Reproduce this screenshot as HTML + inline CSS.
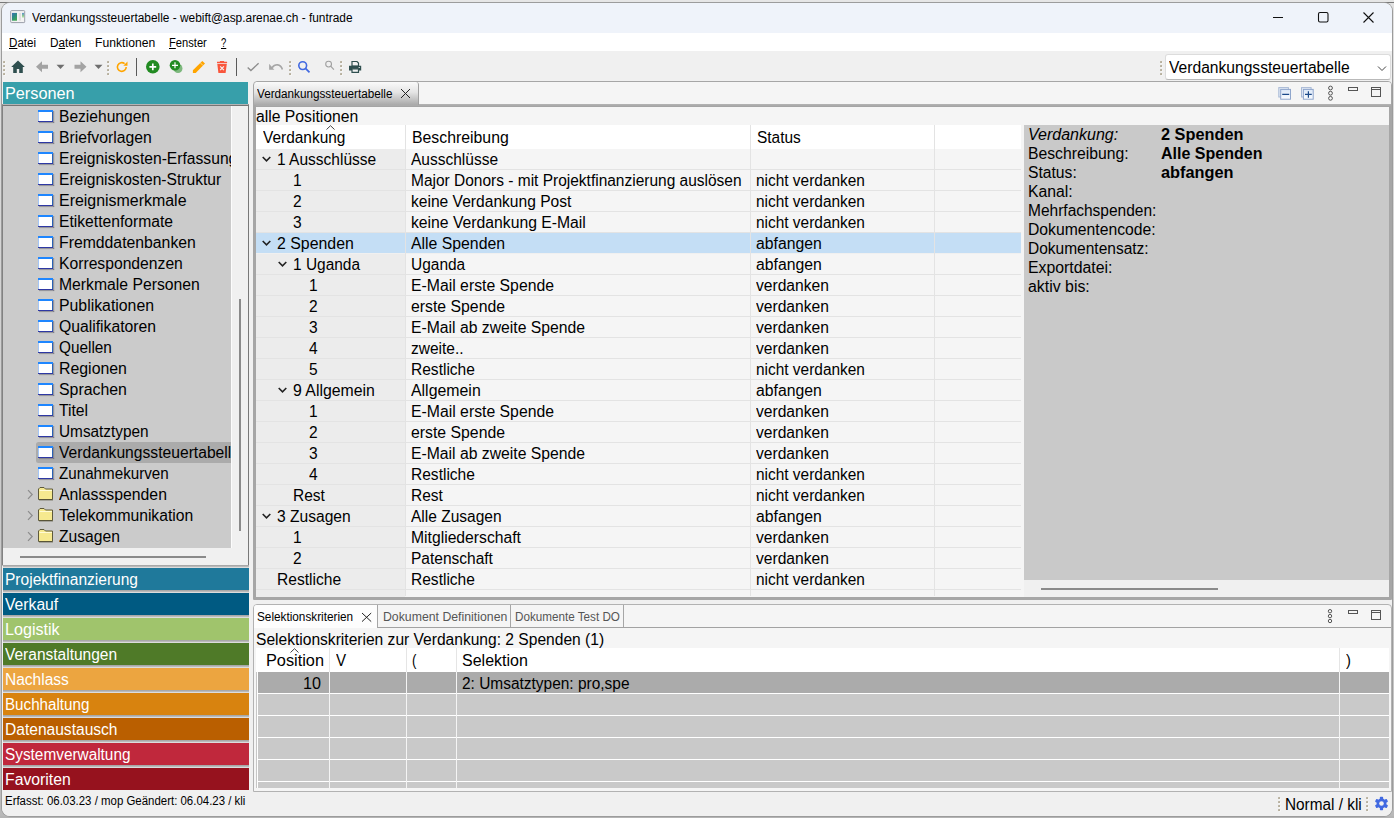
<!DOCTYPE html><html lang="de"><head><meta charset="utf-8"><title>Verdankungssteuertabelle - webift@asp.arenae.ch - funtrade</title><style>
*{box-sizing:border-box;margin:0;padding:0}
html,body{width:1394px;height:818px;overflow:hidden}
body{background:linear-gradient(#e2e2e2,#d4d4d4 30%,#c4c4c4 90%,#b8b8b8);font-family:"Liberation Sans",sans-serif;font-size:16px;color:#000;position:relative}
.abs,#win *{position:absolute}
#win u{position:static}
.tx{transform-origin:0 50%;white-space:pre}
#bgline{left:0;top:2px;width:1394px;height:1px;background:#787878}
#bgtop{left:0;top:0;width:1394px;height:2px;background:#e6e6e6}
#bgbot{left:0;top:816px;width:1394px;height:2px;background:#b4b4b4}
#win{position:absolute;left:2px;top:3px;width:1390px;height:813px;background:#f0f0f0;border-radius:8px;overflow:hidden;box-shadow:0 0 0 1px #9c9c9c}
#win span,#win div{white-space:nowrap}
.ui{font-family:"Liberation Sans",sans-serif;font-size:12px}
#title{left:0;top:0;width:1390px;height:30px;background:#eff3fa}
#menu{left:0;top:30px;width:1390px;height:18px;background:#fff}
#tool{left:0;top:48px;width:1390px;height:30px;background:#f0f0f0}
.t16{font-size:16px;line-height:21px;height:21px}
.t12{font-size:12px;line-height:16px;height:16px}
u{text-decoration:underline;text-underline-offset:1px}
.bar{left:1px;width:246px;height:22px;color:#fff;font-size:16px;line-height:22px;padding-left:3px}
.bar+i{}
.gap{left:1px;width:246px;height:3px;background:linear-gradient(#a8a8a8,#a8a8a8 1px,#dcdcdc 2.5px,#eee)}
.trow{left:0;width:765px;height:21px;background:#f5f5f5;border-bottom:1px solid #e3e3e3}
.trow span{top:0;line-height:21px;font-size:16px}
.vsep{width:1px;background:#e3e3e3}
.chev{width:9px;height:6px}
.ticon{left:36px;width:15px;height:12px}
.titem{left:57px;font-size:16px;line-height:21px;height:21px}
</style></head><body><div class="abs" id="bgtop"></div><div class="abs" id="bgline"></div><div class="abs" id="bgbot"></div><div id="win"><div id="title"><svg style="left:8px;top:7px" width="16" height="14" viewBox="0 0 16 14"><defs><linearGradient id="ga" x1="0" y1="0" x2="0.6" y2="1"><stop offset="0" stop-color="#3d6fb6"/><stop offset="0.5" stop-color="#2d8a86"/><stop offset="1" stop-color="#3fa653"/></linearGradient><linearGradient id="gb" x1="0" y1="0" x2="0" y2="1"><stop offset="0" stop-color="#5a8fd0"/><stop offset="0.6" stop-color="#8fd08a"/><stop offset="1" stop-color="#f4f4f4"/></linearGradient></defs><rect x="0.7" y="0.6" width="14" height="12" rx="0.8" fill="#f3f3f3" stroke="#9a9ea8" stroke-width="1"/><rect x="2" y="2.900" width="5" height="7.800" fill="url(#ga)"/><rect x="8.800" y="2.900" width="2.200" height="7.800" fill="#dedede"/><rect x="12" y="2.900" width="2.100" height="5.400" fill="url(#gb)"/></svg><span class="tx" style="left:30.00px;top:6.5px;font-size:12px;line-height:16px;transform:scaleX(0.9902)">Verdankungssteuertabelle - webift@asp.arenae.ch - funtrade</span><svg style="left:1269px;top:7px" width="110" height="16" viewBox="0 0 110 16" fill="none" stroke="#111" stroke-width="1.1"><path d="M2 7.5h10"/><rect x="47.5" y="2.5" width="9.5" height="9.5" rx="1.5"/><path d="M92.5 2.5l10 10M102.5 2.5l-10 10"/></svg></div><div id="menu"><span class="tx" style="left:7.00px;top:1.5px;font-size:12px;line-height:16px;transform:scaleX(0.9667)"><u>D</u>atei</span><span class="tx" style="left:48.00px;top:1.5px;font-size:12px;line-height:16px;transform:scaleX(0.9794)">D<u>a</u>ten</span><span class="tx" style="left:93.00px;top:1.5px;font-size:12px;line-height:16px;transform:scaleX(1.0138)">Funktionen</span><span class="tx" style="left:167.00px;top:1.5px;font-size:12px;line-height:16px;transform:scaleX(0.9288)"><u>F</u>enster</span><span class="tx" style="left:219.00px;top:1.5px;font-size:12px;line-height:16px;transform:scaleX(0.7867)"><u>?</u></span></div><div id="tool"><svg style="left:1px;top:10px" width="3" height="15" viewBox="0 0 3 15"><rect x="1" y="1" width="1.6" height="1.6" fill="#fbfbfb"/><rect x="0.2" y="0.2" width="1.7" height="1.7" fill="#a59c84"/><rect x="1" y="5" width="1.6" height="1.6" fill="#fbfbfb"/><rect x="0.2" y="4.2" width="1.7" height="1.7" fill="#a59c84"/><rect x="1" y="9" width="1.6" height="1.6" fill="#fbfbfb"/><rect x="0.2" y="8.2" width="1.7" height="1.7" fill="#a59c84"/><rect x="1" y="13" width="1.6" height="1.6" fill="#fbfbfb"/><rect x="0.2" y="12.2" width="1.7" height="1.7" fill="#a59c84"/></svg><svg style="left:105px;top:10px" width="3" height="15" viewBox="0 0 3 15"><rect x="1" y="1" width="1.6" height="1.6" fill="#fbfbfb"/><rect x="0.2" y="0.2" width="1.7" height="1.7" fill="#a59c84"/><rect x="1" y="5" width="1.6" height="1.6" fill="#fbfbfb"/><rect x="0.2" y="4.2" width="1.7" height="1.7" fill="#a59c84"/><rect x="1" y="9" width="1.6" height="1.6" fill="#fbfbfb"/><rect x="0.2" y="8.2" width="1.7" height="1.7" fill="#a59c84"/><rect x="1" y="13" width="1.6" height="1.6" fill="#fbfbfb"/><rect x="0.2" y="12.2" width="1.7" height="1.7" fill="#a59c84"/></svg><svg style="left:287px;top:10px" width="3" height="15" viewBox="0 0 3 15"><rect x="1" y="1" width="1.6" height="1.6" fill="#fbfbfb"/><rect x="0.2" y="0.2" width="1.7" height="1.7" fill="#a59c84"/><rect x="1" y="5" width="1.6" height="1.6" fill="#fbfbfb"/><rect x="0.2" y="4.2" width="1.7" height="1.7" fill="#a59c84"/><rect x="1" y="9" width="1.6" height="1.6" fill="#fbfbfb"/><rect x="0.2" y="8.2" width="1.7" height="1.7" fill="#a59c84"/><rect x="1" y="13" width="1.6" height="1.6" fill="#fbfbfb"/><rect x="0.2" y="12.2" width="1.7" height="1.7" fill="#a59c84"/></svg><svg style="left:338px;top:10px" width="3" height="15" viewBox="0 0 3 15"><rect x="1" y="1" width="1.6" height="1.6" fill="#fbfbfb"/><rect x="0.2" y="0.2" width="1.7" height="1.7" fill="#a59c84"/><rect x="1" y="5" width="1.6" height="1.6" fill="#fbfbfb"/><rect x="0.2" y="4.2" width="1.7" height="1.7" fill="#a59c84"/><rect x="1" y="9" width="1.6" height="1.6" fill="#fbfbfb"/><rect x="0.2" y="8.2" width="1.7" height="1.7" fill="#a59c84"/><rect x="1" y="13" width="1.6" height="1.6" fill="#fbfbfb"/><rect x="0.2" y="12.2" width="1.7" height="1.7" fill="#a59c84"/></svg><svg id="tbicons" style="left:0;top:0" width="370" height="30" viewBox="0 0 370 30"><path d="M16 9.6L9.2 16h2v6h3.6v-4h2.4v4h3.6v-6h2z" fill="#2f4f4f"/><path d="M34 15.8l6-5.5v3.5h6v4h-6v3.5z" fill="#a3a3a3"/><path d="M54.5 13.8h8l-4 4.2z" fill="#6e6e6e"/><path d="M84.5 15.8l-6-5.5v3.5h-6v4h6v3.5z" fill="#a3a3a3"/><path d="M92.5 13.8h8l-4 4.2z" fill="#6e6e6e"/><path d="M124.2 16a4.4 4.4 0 1 1-1.6-3.4" fill="none" stroke="#ffa500" stroke-width="1.6"/><path d="M125.5 10.5v4.2h-4.2z" fill="#ffa500"/><rect x="134" y="7" width="1" height="18" fill="#5a5a5a"/><circle cx="150.8" cy="15.8" r="6.8" fill="#228b22"/><path d="M150.8 12.4v6.8M147.4 15.8h6.8" stroke="#fff" stroke-width="1.7"/><circle cx="176" cy="17.5" r="4.5" fill="#7db87d"/><circle cx="173" cy="14.3" r="5.3" fill="#228b22"/><path d="M173 11.3v6M170 14.3h6" stroke="#fff" stroke-width="1.2"/><path d="M190.9 22V19.2L200.3 10 203 12.6 193.7 22z" fill="#ffa500"/><path d="M198.4 11.9l2.7 2.7" stroke="#f3ead6" stroke-width="0.7"/><path d="M215 10.8h10.1v1.4h-10.1zM217.9 9.9h4.2v1h-4.200zM215.300 13h9.500l-1.200 9h-7.200z" fill="#f9563c"/><path d="M218.2 15.300l3.700 3.800M221.900 15.300l-3.700 3.800" stroke="#f3f3f3" stroke-width="1.200"/><rect x="234" y="7" width="1" height="18" fill="#5a5a5a"/><path d="M245.7 16.500L248.900 19.600 256.600 12.200" fill="none" stroke="#8f8f8f" stroke-width="1.400"/><path d="M270 16.800C273 12.600 278.500 12.600 280.400 18.400" fill="none" stroke="#a6a6a6" stroke-width="1.600"/><path d="M267.100 12.700V18.800H272.300z" fill="#a6a6a6"/><circle cx="300.700" cy="14.600" r="3.900" fill="none" stroke="#4169e1" stroke-width="1.600"/><path d="M303.500 17.400L307.500 21.300" stroke="#4169e1" stroke-width="1.800"/><circle cx="326.600" cy="13.100" r="2.900" fill="none" stroke="#a0a0a0" stroke-width="1.100"/><path d="M328.700 15.200L331.900 18.600" stroke="#a0a0a0" stroke-width="1.200"/><path d="M350 10.500h5l1.500 1.500v3h-6.500z" fill="#f2f2f2" stroke="#2f4f4f" stroke-width="1.200"/><path d="M347 14.800h12.200v4.700h-12.200z" fill="#2f4f4f"/><path d="M350 17.800h6.500v3.600h-6.500z" fill="#f2f2f2" stroke="#2f4f4f" stroke-width="1.200"/><rect x="356.600" y="16" width="1.300" height="0.900" fill="#e8eeee"/></svg><svg style="left:1158px;top:10px" width="3" height="15" viewBox="0 0 3 15"><rect x="1" y="1" width="1.6" height="1.6" fill="#fbfbfb"/><rect x="0.2" y="0.2" width="1.7" height="1.7" fill="#a59c84"/><rect x="1" y="5" width="1.6" height="1.6" fill="#fbfbfb"/><rect x="0.2" y="4.2" width="1.7" height="1.7" fill="#a59c84"/><rect x="1" y="9" width="1.6" height="1.6" fill="#fbfbfb"/><rect x="0.2" y="8.2" width="1.7" height="1.7" fill="#a59c84"/><rect x="1" y="13" width="1.6" height="1.6" fill="#fbfbfb"/><rect x="0.2" y="12.2" width="1.7" height="1.7" fill="#a59c84"/></svg><div style="left:1163px;top:3px;width:226px;height:26px;background:#fff;border:1px solid #dcdcdc;border-bottom-color:#b9b9b9;border-radius:3px"></div><span class="tx" style="left:1167.00px;top:6px;font-size:16px;line-height:21px;transform:scaleX(0.9761)">Verdankungssteuertabelle</span><svg style="left:1375px;top:13.7px" width="10" height="7" viewBox="0 0 10 7"><path d="M1 1.5l4 4 4-4" fill="none" stroke="#444" stroke-width="1"/></svg></div><div style="left:1px;top:79px;width:245px;height:22px;background:#379faa"></div><span class="tx" style="left:3.00px;top:80px;font-size:16px;line-height:21px;transform:scaleX(1.0155);color:#fff">Personen</span><div id="tree" style="left:0;top:101px;width:247px;height:462px;background:#f0f0f0;border:1px solid #828282;border-top-color:#b4b4b4;border-right-color:#787878;border-bottom-color:#fff;overflow:hidden"><div style="left:0;top:0;width:228px;height:443px;background:#cbcbcb"></div><div style="left:228px;top:0;width:1px;height:443px;background:#fcfcfc"></div><div style="left:0;top:0;width:245px;height:1px;background:#747474"></div><div style="left:0;top:0;width:228px;height:443px;overflow:hidden"><svg style="left:35px;top:5px" width="17" height="14" viewBox="0 0 17 14"><rect x="15" y="1" width="1.2" height="12" fill="#6a6a78" opacity="0.55"/><rect x="1" y="12" width="15.2" height="1.100" fill="#6a6a78" opacity="0.55"/><rect x="0" y="0" width="15" height="12" fill="#fff"/><rect x="0" y="2" width="1" height="10" fill="#a4c6f6"/><rect x="14" y="2" width="1" height="10" fill="#2a62b4"/><rect x="0" y="11" width="15" height="1" fill="#2e38a4"/><rect x="0" y="0" width="15" height="2" fill="#1e86ff"/></svg><span class="tx" style="left:56.00px;top:1px;font-size:16px;line-height:21px;transform:scaleX(0.9743)">Beziehungen</span><svg style="left:35px;top:26px" width="17" height="14" viewBox="0 0 17 14"><rect x="15" y="1" width="1.2" height="12" fill="#6a6a78" opacity="0.55"/><rect x="1" y="12" width="15.2" height="1.100" fill="#6a6a78" opacity="0.55"/><rect x="0" y="0" width="15" height="12" fill="#fff"/><rect x="0" y="2" width="1" height="10" fill="#a4c6f6"/><rect x="14" y="2" width="1" height="10" fill="#2a62b4"/><rect x="0" y="11" width="15" height="1" fill="#2e38a4"/><rect x="0" y="0" width="15" height="2" fill="#1e86ff"/></svg><span class="tx" style="left:56.00px;top:22px;font-size:16px;line-height:21px;transform:scaleX(0.9825)">Briefvorlagen</span><svg style="left:35px;top:47px" width="17" height="14" viewBox="0 0 17 14"><rect x="15" y="1" width="1.2" height="12" fill="#6a6a78" opacity="0.55"/><rect x="1" y="12" width="15.2" height="1.100" fill="#6a6a78" opacity="0.55"/><rect x="0" y="0" width="15" height="12" fill="#fff"/><rect x="0" y="2" width="1" height="10" fill="#a4c6f6"/><rect x="14" y="2" width="1" height="10" fill="#2a62b4"/><rect x="0" y="11" width="15" height="1" fill="#2e38a4"/><rect x="0" y="0" width="15" height="2" fill="#1e86ff"/></svg><span class="tx" style="left:56.00px;top:43px;font-size:16px;line-height:21px;transform:scaleX(0.9780)">Ereigniskosten-Erfassung</span><svg style="left:35px;top:68px" width="17" height="14" viewBox="0 0 17 14"><rect x="15" y="1" width="1.2" height="12" fill="#6a6a78" opacity="0.55"/><rect x="1" y="12" width="15.2" height="1.100" fill="#6a6a78" opacity="0.55"/><rect x="0" y="0" width="15" height="12" fill="#fff"/><rect x="0" y="2" width="1" height="10" fill="#a4c6f6"/><rect x="14" y="2" width="1" height="10" fill="#2a62b4"/><rect x="0" y="11" width="15" height="1" fill="#2e38a4"/><rect x="0" y="0" width="15" height="2" fill="#1e86ff"/></svg><span class="tx" style="left:56.00px;top:64px;font-size:16px;line-height:21px;transform:scaleX(0.9752)">Ereigniskosten-Struktur</span><svg style="left:35px;top:89px" width="17" height="14" viewBox="0 0 17 14"><rect x="15" y="1" width="1.2" height="12" fill="#6a6a78" opacity="0.55"/><rect x="1" y="12" width="15.2" height="1.100" fill="#6a6a78" opacity="0.55"/><rect x="0" y="0" width="15" height="12" fill="#fff"/><rect x="0" y="2" width="1" height="10" fill="#a4c6f6"/><rect x="14" y="2" width="1" height="10" fill="#2a62b4"/><rect x="0" y="11" width="15" height="1" fill="#2e38a4"/><rect x="0" y="0" width="15" height="2" fill="#1e86ff"/></svg><span class="tx" style="left:56.00px;top:85px;font-size:16px;line-height:21px;transform:scaleX(0.9959)">Ereignismerkmale</span><svg style="left:35px;top:110px" width="17" height="14" viewBox="0 0 17 14"><rect x="15" y="1" width="1.2" height="12" fill="#6a6a78" opacity="0.55"/><rect x="1" y="12" width="15.2" height="1.100" fill="#6a6a78" opacity="0.55"/><rect x="0" y="0" width="15" height="12" fill="#fff"/><rect x="0" y="2" width="1" height="10" fill="#a4c6f6"/><rect x="14" y="2" width="1" height="10" fill="#2a62b4"/><rect x="0" y="11" width="15" height="1" fill="#2e38a4"/><rect x="0" y="0" width="15" height="2" fill="#1e86ff"/></svg><span class="tx" style="left:56.00px;top:106px;font-size:16px;line-height:21px;transform:scaleX(0.9785)">Etikettenformate</span><svg style="left:35px;top:131px" width="17" height="14" viewBox="0 0 17 14"><rect x="15" y="1" width="1.2" height="12" fill="#6a6a78" opacity="0.55"/><rect x="1" y="12" width="15.2" height="1.100" fill="#6a6a78" opacity="0.55"/><rect x="0" y="0" width="15" height="12" fill="#fff"/><rect x="0" y="2" width="1" height="10" fill="#a4c6f6"/><rect x="14" y="2" width="1" height="10" fill="#2a62b4"/><rect x="0" y="11" width="15" height="1" fill="#2e38a4"/><rect x="0" y="0" width="15" height="2" fill="#1e86ff"/></svg><span class="tx" style="left:56.00px;top:127px;font-size:16px;line-height:21px;transform:scaleX(0.9861)">Fremddatenbanken</span><svg style="left:35px;top:152px" width="17" height="14" viewBox="0 0 17 14"><rect x="15" y="1" width="1.2" height="12" fill="#6a6a78" opacity="0.55"/><rect x="1" y="12" width="15.2" height="1.100" fill="#6a6a78" opacity="0.55"/><rect x="0" y="0" width="15" height="12" fill="#fff"/><rect x="0" y="2" width="1" height="10" fill="#a4c6f6"/><rect x="14" y="2" width="1" height="10" fill="#2a62b4"/><rect x="0" y="11" width="15" height="1" fill="#2e38a4"/><rect x="0" y="0" width="15" height="2" fill="#1e86ff"/></svg><span class="tx" style="left:56.00px;top:148px;font-size:16px;line-height:21px;transform:scaleX(0.9803)">Korrespondenzen</span><svg style="left:35px;top:173px" width="17" height="14" viewBox="0 0 17 14"><rect x="15" y="1" width="1.2" height="12" fill="#6a6a78" opacity="0.55"/><rect x="1" y="12" width="15.2" height="1.100" fill="#6a6a78" opacity="0.55"/><rect x="0" y="0" width="15" height="12" fill="#fff"/><rect x="0" y="2" width="1" height="10" fill="#a4c6f6"/><rect x="14" y="2" width="1" height="10" fill="#2a62b4"/><rect x="0" y="11" width="15" height="1" fill="#2e38a4"/><rect x="0" y="0" width="15" height="2" fill="#1e86ff"/></svg><span class="tx" style="left:56.00px;top:169px;font-size:16px;line-height:21px;transform:scaleX(0.9836)">Merkmale Personen</span><svg style="left:35px;top:194px" width="17" height="14" viewBox="0 0 17 14"><rect x="15" y="1" width="1.2" height="12" fill="#6a6a78" opacity="0.55"/><rect x="1" y="12" width="15.2" height="1.100" fill="#6a6a78" opacity="0.55"/><rect x="0" y="0" width="15" height="12" fill="#fff"/><rect x="0" y="2" width="1" height="10" fill="#a4c6f6"/><rect x="14" y="2" width="1" height="10" fill="#2a62b4"/><rect x="0" y="11" width="15" height="1" fill="#2e38a4"/><rect x="0" y="0" width="15" height="2" fill="#1e86ff"/></svg><span class="tx" style="left:56.00px;top:190px;font-size:16px;line-height:21px;transform:scaleX(0.9891)">Publikationen</span><svg style="left:35px;top:215px" width="17" height="14" viewBox="0 0 17 14"><rect x="15" y="1" width="1.2" height="12" fill="#6a6a78" opacity="0.55"/><rect x="1" y="12" width="15.2" height="1.100" fill="#6a6a78" opacity="0.55"/><rect x="0" y="0" width="15" height="12" fill="#fff"/><rect x="0" y="2" width="1" height="10" fill="#a4c6f6"/><rect x="14" y="2" width="1" height="10" fill="#2a62b4"/><rect x="0" y="11" width="15" height="1" fill="#2e38a4"/><rect x="0" y="0" width="15" height="2" fill="#1e86ff"/></svg><span class="tx" style="left:56.00px;top:211px;font-size:16px;line-height:21px;transform:scaleX(0.9838)">Qualifikatoren</span><svg style="left:35px;top:236px" width="17" height="14" viewBox="0 0 17 14"><rect x="15" y="1" width="1.2" height="12" fill="#6a6a78" opacity="0.55"/><rect x="1" y="12" width="15.2" height="1.100" fill="#6a6a78" opacity="0.55"/><rect x="0" y="0" width="15" height="12" fill="#fff"/><rect x="0" y="2" width="1" height="10" fill="#a4c6f6"/><rect x="14" y="2" width="1" height="10" fill="#2a62b4"/><rect x="0" y="11" width="15" height="1" fill="#2e38a4"/><rect x="0" y="0" width="15" height="2" fill="#1e86ff"/></svg><span class="tx" style="left:56.00px;top:232px;font-size:16px;line-height:21px;transform:scaleX(0.9592)">Quellen</span><svg style="left:35px;top:257px" width="17" height="14" viewBox="0 0 17 14"><rect x="15" y="1" width="1.2" height="12" fill="#6a6a78" opacity="0.55"/><rect x="1" y="12" width="15.2" height="1.100" fill="#6a6a78" opacity="0.55"/><rect x="0" y="0" width="15" height="12" fill="#fff"/><rect x="0" y="2" width="1" height="10" fill="#a4c6f6"/><rect x="14" y="2" width="1" height="10" fill="#2a62b4"/><rect x="0" y="11" width="15" height="1" fill="#2e38a4"/><rect x="0" y="0" width="15" height="2" fill="#1e86ff"/></svg><span class="tx" style="left:56.00px;top:253px;font-size:16px;line-height:21px;transform:scaleX(0.9917)">Regionen</span><svg style="left:35px;top:278px" width="17" height="14" viewBox="0 0 17 14"><rect x="15" y="1" width="1.2" height="12" fill="#6a6a78" opacity="0.55"/><rect x="1" y="12" width="15.2" height="1.100" fill="#6a6a78" opacity="0.55"/><rect x="0" y="0" width="15" height="12" fill="#fff"/><rect x="0" y="2" width="1" height="10" fill="#a4c6f6"/><rect x="14" y="2" width="1" height="10" fill="#2a62b4"/><rect x="0" y="11" width="15" height="1" fill="#2e38a4"/><rect x="0" y="0" width="15" height="2" fill="#1e86ff"/></svg><span class="tx" style="left:56.00px;top:274px;font-size:16px;line-height:21px;transform:scaleX(0.9918)">Sprachen</span><svg style="left:35px;top:299px" width="17" height="14" viewBox="0 0 17 14"><rect x="15" y="1" width="1.2" height="12" fill="#6a6a78" opacity="0.55"/><rect x="1" y="12" width="15.2" height="1.100" fill="#6a6a78" opacity="0.55"/><rect x="0" y="0" width="15" height="12" fill="#fff"/><rect x="0" y="2" width="1" height="10" fill="#a4c6f6"/><rect x="14" y="2" width="1" height="10" fill="#2a62b4"/><rect x="0" y="11" width="15" height="1" fill="#2e38a4"/><rect x="0" y="0" width="15" height="2" fill="#1e86ff"/></svg><span class="tx" style="left:56.00px;top:295px;font-size:16px;line-height:21px;transform:scaleX(0.9803)">Titel</span><svg style="left:35px;top:320px" width="17" height="14" viewBox="0 0 17 14"><rect x="15" y="1" width="1.2" height="12" fill="#6a6a78" opacity="0.55"/><rect x="1" y="12" width="15.2" height="1.100" fill="#6a6a78" opacity="0.55"/><rect x="0" y="0" width="15" height="12" fill="#fff"/><rect x="0" y="2" width="1" height="10" fill="#a4c6f6"/><rect x="14" y="2" width="1" height="10" fill="#2a62b4"/><rect x="0" y="11" width="15" height="1" fill="#2e38a4"/><rect x="0" y="0" width="15" height="2" fill="#1e86ff"/></svg><span class="tx" style="left:56.00px;top:316px;font-size:16px;line-height:21px;transform:scaleX(0.9596)">Umsatztypen</span><div style="left:33px;top:337px;width:199px;height:21px;background:#ababab;border-radius:2.5px"></div><svg style="left:35px;top:341px" width="17" height="14" viewBox="0 0 17 14"><rect x="15" y="1" width="1.2" height="12" fill="#6a6a78" opacity="0.55"/><rect x="1" y="12" width="15.2" height="1.100" fill="#6a6a78" opacity="0.55"/><rect x="0" y="0" width="15" height="12" fill="#fff"/><rect x="0" y="2" width="1" height="10" fill="#a4c6f6"/><rect x="14" y="2" width="1" height="10" fill="#2a62b4"/><rect x="0" y="11" width="15" height="1" fill="#2e38a4"/><rect x="0" y="0" width="15" height="2" fill="#1e86ff"/></svg><span class="tx" style="left:56.00px;top:337px;font-size:16px;line-height:21px;transform:scaleX(0.9780)">Verdankungssteuertabelle</span><svg style="left:35px;top:362px" width="17" height="14" viewBox="0 0 17 14"><rect x="15" y="1" width="1.2" height="12" fill="#6a6a78" opacity="0.55"/><rect x="1" y="12" width="15.2" height="1.100" fill="#6a6a78" opacity="0.55"/><rect x="0" y="0" width="15" height="12" fill="#fff"/><rect x="0" y="2" width="1" height="10" fill="#a4c6f6"/><rect x="14" y="2" width="1" height="10" fill="#2a62b4"/><rect x="0" y="11" width="15" height="1" fill="#2e38a4"/><rect x="0" y="0" width="15" height="2" fill="#1e86ff"/></svg><span class="tx" style="left:56.00px;top:358px;font-size:16px;line-height:21px;transform:scaleX(0.9487)">Zunahmekurven</span><svg style="left:23.5px;top:384px" width="7" height="11" viewBox="0 0 7 11"><path d="M1 1.2l4.2 4.3-4.2 4.3" fill="none" stroke="#8c8c8c" stroke-width="1.2"/></svg><svg style="left:35px;top:382px" width="16" height="14" viewBox="0 0 16 14"><path d="M0.5 12.5V2l1.5-1.5h4l1.5 1.5h7v10.5z" fill="#f6e98f" stroke="#5e5a3c" stroke-width="1"/><path d="M1.5 3.5h12.5" stroke="#fffbd6" stroke-width="1"/><path d="M1 13h14" stroke="#4a4630" stroke-width="0.6"/></svg><span class="tx" style="left:56.00px;top:379px;font-size:16px;line-height:21px;transform:scaleX(0.9864)">Anlassspenden</span><svg style="left:23.5px;top:405px" width="7" height="11" viewBox="0 0 7 11"><path d="M1 1.2l4.2 4.3-4.2 4.3" fill="none" stroke="#8c8c8c" stroke-width="1.2"/></svg><svg style="left:35px;top:403px" width="16" height="14" viewBox="0 0 16 14"><path d="M0.5 12.5V2l1.5-1.5h4l1.5 1.5h7v10.5z" fill="#f6e98f" stroke="#5e5a3c" stroke-width="1"/><path d="M1.5 3.5h12.5" stroke="#fffbd6" stroke-width="1"/><path d="M1 13h14" stroke="#4a4630" stroke-width="0.6"/></svg><span class="tx" style="left:56.00px;top:400px;font-size:16px;line-height:21px;transform:scaleX(0.9800)">Telekommunikation</span><svg style="left:23.5px;top:426px" width="7" height="11" viewBox="0 0 7 11"><path d="M1 1.2l4.2 4.3-4.2 4.3" fill="none" stroke="#8c8c8c" stroke-width="1.2"/></svg><svg style="left:35px;top:424px" width="16" height="14" viewBox="0 0 16 14"><path d="M0.5 12.5V2l1.5-1.5h4l1.5 1.5h7v10.5z" fill="#f6e98f" stroke="#5e5a3c" stroke-width="1"/><path d="M1.5 3.5h12.5" stroke="#fffbd6" stroke-width="1"/><path d="M1 13h14" stroke="#4a4630" stroke-width="0.6"/></svg><span class="tx" style="left:56.00px;top:421px;font-size:16px;line-height:21px;transform:scaleX(0.9783)">Zusagen</span></div><div style="left:236px;top:194px;width:2px;height:232px;background:#8a8a8a"></div><div style="left:17px;top:451px;width:186px;height:2px;background:#8a8a8a"></div></div><div class="gap" style="top:562px"></div><div class="bar" style="top:565px;background:#1f799b"></div><span class="tx" style="left:3.00px;top:565.5px;font-size:16px;line-height:21px;transform:scaleX(0.9710);color:#fff">Projektfinanzierung</span><div class="gap" style="top:587px"></div><div class="bar" style="top:590px;background:#005a82"></div><span class="tx" style="left:3.00px;top:590.5px;font-size:16px;line-height:21px;transform:scaleX(0.9801);color:#fff">Verkauf</span><div class="gap" style="top:612px"></div><div class="bar" style="top:615px;background:#a0c46c"></div><span class="tx" style="left:3.00px;top:615.5px;font-size:16px;line-height:21px;transform:scaleX(1.0079);color:#fff">Logistik</span><div class="gap" style="top:637px"></div><div class="bar" style="top:640px;background:#4f7a28"></div><span class="tx" style="left:3.00px;top:640.5px;font-size:16px;line-height:21px;transform:scaleX(0.9694);color:#fff">Veranstaltungen</span><div class="gap" style="top:662px"></div><div class="bar" style="top:665px;background:#eca540"></div><span class="tx" style="left:3.00px;top:665.5px;font-size:16px;line-height:21px;transform:scaleX(0.9705);color:#fff">Nachlass</span><div class="gap" style="top:687px"></div><div class="bar" style="top:690px;background:#d8830f"></div><span class="tx" style="left:3.00px;top:690.5px;font-size:16px;line-height:21px;transform:scaleX(0.9485);color:#fff">Buchhaltung</span><div class="gap" style="top:712px"></div><div class="bar" style="top:715px;background:#ba5f00"></div><span class="tx" style="left:3.00px;top:715.5px;font-size:16px;line-height:21px;transform:scaleX(0.9730);color:#fff">Datenaustausch</span><div class="gap" style="top:737px"></div><div class="bar" style="top:740px;background:#c0283c"></div><span class="tx" style="left:3.00px;top:740.5px;font-size:16px;line-height:21px;transform:scaleX(0.9600);color:#fff">Systemverwaltung</span><div class="gap" style="top:762px"></div><div class="bar" style="top:765px;background:#96121e"></div><span class="tx" style="left:3.00px;top:765.5px;font-size:16px;line-height:21px;transform:scaleX(0.9854);color:#fff">Favoriten</span><div style="left:0;top:788px;width:1390px;height:25px;background:#f0f0f0"></div><span class="tx" style="left:3.00px;top:790.4px;font-size:12px;line-height:16px;transform:scaleX(0.9533)">Erfasst: 06.03.23 / mop Geändert: 06.04.23 / kli</span><svg style="left:1276.2px;top:794px" width="3" height="15" viewBox="0 0 3 15"><rect x="1" y="1" width="1.6" height="1.6" fill="#fbfbfb"/><rect x="0.2" y="0.2" width="1.7" height="1.7" fill="#a59c84"/><rect x="1" y="5" width="1.6" height="1.6" fill="#fbfbfb"/><rect x="0.2" y="4.2" width="1.7" height="1.7" fill="#a59c84"/><rect x="1" y="9" width="1.6" height="1.6" fill="#fbfbfb"/><rect x="0.2" y="8.2" width="1.7" height="1.7" fill="#a59c84"/><rect x="1" y="13" width="1.6" height="1.6" fill="#fbfbfb"/><rect x="0.2" y="12.2" width="1.7" height="1.7" fill="#a59c84"/></svg><span class="tx" style="left:1283.00px;top:791px;font-size:16px;line-height:21px;transform:scaleX(0.9591)">Normal / kli</span><svg style="left:1364.2px;top:794px" width="3" height="15" viewBox="0 0 3 15"><rect x="1" y="1" width="1.6" height="1.6" fill="#fbfbfb"/><rect x="0.2" y="0.2" width="1.7" height="1.7" fill="#a59c84"/><rect x="1" y="5" width="1.6" height="1.6" fill="#fbfbfb"/><rect x="0.2" y="4.2" width="1.7" height="1.7" fill="#a59c84"/><rect x="1" y="9" width="1.6" height="1.6" fill="#fbfbfb"/><rect x="0.2" y="8.2" width="1.7" height="1.7" fill="#a59c84"/><rect x="1" y="13" width="1.6" height="1.6" fill="#fbfbfb"/><rect x="0.2" y="12.2" width="1.7" height="1.7" fill="#a59c84"/></svg><svg style="left:1371.5px;top:793.3px" width="15" height="15" viewBox="0 0 15 15"><g fill="#4169e1"><circle cx="7.5" cy="7.5" r="4.900"/><rect x="5.900" y="0.800" width="3.200" height="3.400" rx="0.700" transform="rotate(0 7.5 7.5)"/><rect x="5.900" y="0.800" width="3.200" height="3.400" rx="0.700" transform="rotate(60 7.5 7.5)"/><rect x="5.900" y="0.800" width="3.200" height="3.400" rx="0.700" transform="rotate(120 7.5 7.5)"/><rect x="5.900" y="0.800" width="3.200" height="3.400" rx="0.700" transform="rotate(180 7.5 7.5)"/><rect x="5.900" y="0.800" width="3.200" height="3.400" rx="0.700" transform="rotate(240 7.5 7.5)"/><rect x="5.900" y="0.800" width="3.200" height="3.400" rx="0.700" transform="rotate(300 7.5 7.5)"/></g><circle cx="7.5" cy="7.5" r="2.300" fill="#f0f0f0"/></svg><div id="ed" style="left:251px;top:78px;width:1139px;height:519px;background:#f5f5f5;border:1px solid #a6a6a6;border-radius:4px 4px 0 0;overflow:hidden"><div style="left:0;top:0;width:1137px;height:23px;background:#f5f5f5"></div><div style="left:0;top:22px;width:1137px;height:3px;background:linear-gradient(#b4b4b4,#a2a2a2)"></div><div style="left:0;top:0;width:2px;height:517px;background:#a6a6a6"></div><div style="left:1135px;top:24px;width:2px;height:493px;background:#a6a6a6"></div><div style="left:0;top:515px;width:1137px;height:2px;background:#a6a6a6"></div><div style="left:0;top:0;width:164.5px;height:23px;background:linear-gradient(#fafafa,#e4e4e4 45%,#a9a9a9);border-right:1px solid #a0a0a0;border-radius:3px 3px 0 0"></div><span class="tx" style="left:3.00px;top:3.5px;font-size:12px;line-height:16px;transform:scaleX(0.9759)">Verdankungssteuertabelle</span><svg style="left:146px;top:5.7px" width="11" height="11" viewBox="0 0 11 11"><path d="M1 1l9 9M10 1l-9 9" stroke="#222" stroke-width="1"/></svg><svg style="left:1020px;top:2px" width="114" height="20" viewBox="0 0 114 20" fill="none"><defs><linearGradient id="gi" x1="0" y1="0" x2="0" y2="1"><stop offset="0" stop-color="#dbe7f7"/><stop offset="1" stop-color="#fbfdff"/></linearGradient></defs><rect x="4.8" y="3.600" width="9.600" height="9.400" fill="#e2eaf6" stroke="#a8b9d6"/><rect x="6.700" y="5.400" width="9.800" height="9.800" fill="url(#gi)" stroke="#8fa6cc"/><path d="M8.200 10.400h7" stroke="#1c4a8a" stroke-width="1.300"/><rect x="27.500" y="3.600" width="9.600" height="9.400" fill="#e2eaf6" stroke="#a8b9d6"/><rect x="29.400" y="5.400" width="9.800" height="9.800" fill="url(#gi)" stroke="#8fa6cc"/><path d="M31 10.400h6.800M34.400 7.200v6.500" stroke="#1c4a8a" stroke-width="1.200"/><g stroke="#444" stroke-width="0.9"><circle cx="56.5" cy="4" r="1.900"/><circle cx="56.5" cy="9.200" r="1.900"/><circle cx="56.5" cy="14.300" r="1.900"/></g><rect x="74.5" y="3.5" width="9" height="3" stroke="#555" stroke-width="1"/><rect x="97.5" y="3.5" width="9" height="9" stroke="#555" stroke-width="1"/><path d="M97.5 5.5h9" stroke="#555" stroke-width="1"/></svg><span class="tx" style="left:2.00px;top:24px;font-size:16px;line-height:21px;transform:scaleX(0.9822)">alle Positionen</span><div id="tbl" style="left:2px;top:43px;width:765px;height:472px;overflow:hidden;background:#f5f5f5"><div style="left:0;top:0;width:765px;height:24px;background:#fff"></div><svg style="left:70px;top:0px" width="9" height="5" viewBox="0 0 9 5"><path d="M0.5 4.5l4-3.8 4 3.8" fill="none" stroke="#444" stroke-width="1"/></svg><span class="tx" style="left:7.00px;top:2px;font-size:16px;line-height:21px;transform:scaleX(0.9647)">Verdankung</span><span class="tx" style="left:156.00px;top:2px;font-size:16px;line-height:21px;transform:scaleX(0.9885)">Beschreibung</span><span class="tx" style="left:501.00px;top:2px;font-size:16px;line-height:21px;transform:scaleX(0.9669)">Status</span><div class="trow" style="top:24px"><div style="left:0;top:0;width:149px;height:20px;background:#ececec"></div><svg style="left:6px;top:6.5px" width="10" height="7" viewBox="0 0 10 7"><path d="M0.7 1L4.5 4.8 8.3 1" fill="none" stroke="#222" stroke-width="1.6"/></svg><span class="tx" style="left:21.00px;top:0px;font-size:16px;line-height:21px;transform:scaleX(0.9698)">1 Ausschlüsse</span><span class="tx" style="left:155.00px;top:0px;font-size:16px;line-height:21px;transform:scaleX(0.9696)">Ausschlüsse</span></div><div class="trow" style="top:45px"><div style="left:0;top:0;width:149px;height:20px;background:#ececec"></div><span class="tx" style="left:37.00px;top:0px;font-size:16px;line-height:21px;transform:scaleX(0.9690)">1</span><span class="tx" style="left:155.00px;top:0px;font-size:16px;line-height:21px;transform:scaleX(0.9681)">Major Donors - mit Projektfinanzierung auslösen</span><span class="tx" style="left:500.00px;top:0px;font-size:16px;line-height:21px;transform:scaleX(0.9641)">nicht verdanken</span></div><div class="trow" style="top:66px"><div style="left:0;top:0;width:149px;height:20px;background:#ececec"></div><span class="tx" style="left:37.00px;top:0px;font-size:16px;line-height:21px;transform:scaleX(0.9690)">2</span><span class="tx" style="left:155.00px;top:0px;font-size:16px;line-height:21px;transform:scaleX(0.9748)">keine Verdankung Post</span><span class="tx" style="left:500.00px;top:0px;font-size:16px;line-height:21px;transform:scaleX(0.9641)">nicht verdanken</span></div><div class="trow" style="top:87px"><div style="left:0;top:0;width:149px;height:20px;background:#ececec"></div><span class="tx" style="left:37.00px;top:0px;font-size:16px;line-height:21px;transform:scaleX(0.9690)">3</span><span class="tx" style="left:155.00px;top:0px;font-size:16px;line-height:21px;transform:scaleX(0.9830)">keine Verdankung E-Mail</span><span class="tx" style="left:500.00px;top:0px;font-size:16px;line-height:21px;transform:scaleX(0.9641)">nicht verdanken</span></div><div class="trow" style="top:108px;background:#c4def5;border-bottom-color:#f0f0f0"><svg style="left:6px;top:6.5px" width="10" height="7" viewBox="0 0 10 7"><path d="M0.7 1L4.5 4.8 8.3 1" fill="none" stroke="#222" stroke-width="1.6"/></svg><span class="tx" style="left:21.00px;top:0px;font-size:16px;line-height:21px;transform:scaleX(0.9926)">2 Spenden</span><span class="tx" style="left:155.00px;top:0px;font-size:16px;line-height:21px;transform:scaleX(0.9878)">Alle Spenden</span><span class="tx" style="left:500.00px;top:0px;font-size:16px;line-height:21px;transform:scaleX(0.9848)">abfangen</span></div><div class="trow" style="top:129px"><div style="left:0;top:0;width:149px;height:20px;background:#ececec"></div><svg style="left:22px;top:6.5px" width="10" height="7" viewBox="0 0 10 7"><path d="M0.7 1L4.5 4.8 8.3 1" fill="none" stroke="#222" stroke-width="1.6"/></svg><span class="tx" style="left:37.00px;top:0px;font-size:16px;line-height:21px;transform:scaleX(0.9655)">1 Uganda</span><span class="tx" style="left:155.00px;top:0px;font-size:16px;line-height:21px;transform:scaleX(0.9670)">Uganda</span><span class="tx" style="left:500.00px;top:0px;font-size:16px;line-height:21px;transform:scaleX(0.9848)">abfangen</span></div><div class="trow" style="top:150px"><div style="left:0;top:0;width:149px;height:20px;background:#ececec"></div><span class="tx" style="left:53.00px;top:0px;font-size:16px;line-height:21px;transform:scaleX(0.9690)">1</span><span class="tx" style="left:155.00px;top:0px;font-size:16px;line-height:21px;transform:scaleX(0.9865)">E-Mail erste Spende</span><span class="tx" style="left:500.00px;top:0px;font-size:16px;line-height:21px;transform:scaleX(0.9758)">verdanken</span></div><div class="trow" style="top:171px"><div style="left:0;top:0;width:149px;height:20px;background:#ececec"></div><span class="tx" style="left:53.00px;top:0px;font-size:16px;line-height:21px;transform:scaleX(0.9690)">2</span><span class="tx" style="left:155.00px;top:0px;font-size:16px;line-height:21px;transform:scaleX(0.9876)">erste Spende</span><span class="tx" style="left:500.00px;top:0px;font-size:16px;line-height:21px;transform:scaleX(0.9758)">verdanken</span></div><div class="trow" style="top:192px"><div style="left:0;top:0;width:149px;height:20px;background:#ececec"></div><span class="tx" style="left:53.00px;top:0px;font-size:16px;line-height:21px;transform:scaleX(0.9690)">3</span><span class="tx" style="left:155.00px;top:0px;font-size:16px;line-height:21px;transform:scaleX(0.9837)">E-Mail ab zweite Spende</span><span class="tx" style="left:500.00px;top:0px;font-size:16px;line-height:21px;transform:scaleX(0.9758)">verdanken</span></div><div class="trow" style="top:213px"><div style="left:0;top:0;width:149px;height:20px;background:#ececec"></div><span class="tx" style="left:53.00px;top:0px;font-size:16px;line-height:21px;transform:scaleX(0.9690)">4</span><span class="tx" style="left:155.00px;top:0px;font-size:16px;line-height:21px;transform:scaleX(0.9700)">zweite..</span><span class="tx" style="left:500.00px;top:0px;font-size:16px;line-height:21px;transform:scaleX(0.9758)">verdanken</span></div><div class="trow" style="top:234px"><div style="left:0;top:0;width:149px;height:20px;background:#ececec"></div><span class="tx" style="left:53.00px;top:0px;font-size:16px;line-height:21px;transform:scaleX(0.9690)">5</span><span class="tx" style="left:155.00px;top:0px;font-size:16px;line-height:21px;transform:scaleX(0.9709)">Restliche</span><span class="tx" style="left:500.00px;top:0px;font-size:16px;line-height:21px;transform:scaleX(0.9641)">nicht verdanken</span></div><div class="trow" style="top:255px"><div style="left:0;top:0;width:149px;height:20px;background:#ececec"></div><svg style="left:22px;top:6.5px" width="10" height="7" viewBox="0 0 10 7"><path d="M0.7 1L4.5 4.8 8.3 1" fill="none" stroke="#222" stroke-width="1.6"/></svg><span class="tx" style="left:37.00px;top:0px;font-size:16px;line-height:21px;transform:scaleX(0.9892)">9 Allgemein</span><span class="tx" style="left:155.00px;top:0px;font-size:16px;line-height:21px;transform:scaleX(0.9925)">Allgemein</span><span class="tx" style="left:500.00px;top:0px;font-size:16px;line-height:21px;transform:scaleX(0.9848)">abfangen</span></div><div class="trow" style="top:276px"><div style="left:0;top:0;width:149px;height:20px;background:#ececec"></div><span class="tx" style="left:53.00px;top:0px;font-size:16px;line-height:21px;transform:scaleX(0.9690)">1</span><span class="tx" style="left:155.00px;top:0px;font-size:16px;line-height:21px;transform:scaleX(0.9865)">E-Mail erste Spende</span><span class="tx" style="left:500.00px;top:0px;font-size:16px;line-height:21px;transform:scaleX(0.9758)">verdanken</span></div><div class="trow" style="top:297px"><div style="left:0;top:0;width:149px;height:20px;background:#ececec"></div><span class="tx" style="left:53.00px;top:0px;font-size:16px;line-height:21px;transform:scaleX(0.9690)">2</span><span class="tx" style="left:155.00px;top:0px;font-size:16px;line-height:21px;transform:scaleX(0.9876)">erste Spende</span><span class="tx" style="left:500.00px;top:0px;font-size:16px;line-height:21px;transform:scaleX(0.9758)">verdanken</span></div><div class="trow" style="top:318px"><div style="left:0;top:0;width:149px;height:20px;background:#ececec"></div><span class="tx" style="left:53.00px;top:0px;font-size:16px;line-height:21px;transform:scaleX(0.9690)">3</span><span class="tx" style="left:155.00px;top:0px;font-size:16px;line-height:21px;transform:scaleX(0.9837)">E-Mail ab zweite Spende</span><span class="tx" style="left:500.00px;top:0px;font-size:16px;line-height:21px;transform:scaleX(0.9758)">verdanken</span></div><div class="trow" style="top:339px"><div style="left:0;top:0;width:149px;height:20px;background:#ececec"></div><span class="tx" style="left:53.00px;top:0px;font-size:16px;line-height:21px;transform:scaleX(0.9690)">4</span><span class="tx" style="left:155.00px;top:0px;font-size:16px;line-height:21px;transform:scaleX(0.9709)">Restliche</span><span class="tx" style="left:500.00px;top:0px;font-size:16px;line-height:21px;transform:scaleX(0.9641)">nicht verdanken</span></div><div class="trow" style="top:360px"><div style="left:0;top:0;width:149px;height:20px;background:#ececec"></div><span class="tx" style="left:37.00px;top:0px;font-size:16px;line-height:21px;transform:scaleX(0.9701)">Rest</span><span class="tx" style="left:155.00px;top:0px;font-size:16px;line-height:21px;transform:scaleX(0.9701)">Rest</span><span class="tx" style="left:500.00px;top:0px;font-size:16px;line-height:21px;transform:scaleX(0.9641)">nicht verdanken</span></div><div class="trow" style="top:381px"><div style="left:0;top:0;width:149px;height:20px;background:#ececec"></div><svg style="left:6px;top:6.5px" width="10" height="7" viewBox="0 0 10 7"><path d="M0.7 1L4.5 4.8 8.3 1" fill="none" stroke="#222" stroke-width="1.6"/></svg><span class="tx" style="left:21.00px;top:0px;font-size:16px;line-height:21px;transform:scaleX(0.9749)">3 Zusagen</span><span class="tx" style="left:155.00px;top:0px;font-size:16px;line-height:21px;transform:scaleX(0.9702)">Alle Zusagen</span><span class="tx" style="left:500.00px;top:0px;font-size:16px;line-height:21px;transform:scaleX(0.9848)">abfangen</span></div><div class="trow" style="top:402px"><div style="left:0;top:0;width:149px;height:20px;background:#ececec"></div><span class="tx" style="left:37.00px;top:0px;font-size:16px;line-height:21px;transform:scaleX(0.9690)">1</span><span class="tx" style="left:155.00px;top:0px;font-size:16px;line-height:21px;transform:scaleX(0.9810)">Mitgliederschaft</span><span class="tx" style="left:500.00px;top:0px;font-size:16px;line-height:21px;transform:scaleX(0.9758)">verdanken</span></div><div class="trow" style="top:423px"><div style="left:0;top:0;width:149px;height:20px;background:#ececec"></div><span class="tx" style="left:37.00px;top:0px;font-size:16px;line-height:21px;transform:scaleX(0.9690)">2</span><span class="tx" style="left:155.00px;top:0px;font-size:16px;line-height:21px;transform:scaleX(0.9694)">Patenschaft</span><span class="tx" style="left:500.00px;top:0px;font-size:16px;line-height:21px;transform:scaleX(0.9758)">verdanken</span></div><div class="trow" style="top:444px"><div style="left:0;top:0;width:149px;height:20px;background:#ececec"></div><span class="tx" style="left:21.00px;top:0px;font-size:16px;line-height:21px;transform:scaleX(0.9740)">Restliche</span><span class="tx" style="left:155.00px;top:0px;font-size:16px;line-height:21px;transform:scaleX(0.9709)">Restliche</span><span class="tx" style="left:500.00px;top:0px;font-size:16px;line-height:21px;transform:scaleX(0.9641)">nicht verdanken</span></div><div class="trow" style="top:465px"><div style="left:0;top:0;width:149px;height:20px;background:#ececec"></div></div><div class="vsep" style="left:149px;top:0;height:471px"></div><div class="vsep" style="left:494px;top:0;height:471px"></div><div class="vsep" style="left:678px;top:0;height:471px"></div></div><div style="left:770px;top:43px;width:365px;height:454.5px;background:#c9c9c9"></div><span class="tx" style="left:774.00px;top:42px;font-size:16px;line-height:21px;transform:scaleX(1.0000);font-style:italic">Verdankung:</span><span class="tx" style="left:907.00px;top:42px;font-size:16px;line-height:21px;transform:scaleX(1.0186);font-weight:bold">2 Spenden</span><span class="tx" style="left:774.00px;top:61px;font-size:16px;line-height:21px;transform:scaleX(0.9829)">Beschreibung:</span><span class="tx" style="left:907.00px;top:61px;font-size:16px;line-height:21px;transform:scaleX(1.0014);font-weight:bold">Alle Spenden</span><span class="tx" style="left:774.00px;top:80px;font-size:16px;line-height:21px;transform:scaleX(0.9784)">Status:</span><span class="tx" style="left:907.00px;top:80px;font-size:16px;line-height:21px;transform:scaleX(1.0196);font-weight:bold">abfangen</span><span class="tx" style="left:774.00px;top:99px;font-size:16px;line-height:21px;transform:scaleX(0.9862)">Kanal:</span><span class="tx" style="left:774.00px;top:118px;font-size:16px;line-height:21px;transform:scaleX(0.9689)">Mehrfachspenden:</span><span class="tx" style="left:774.00px;top:137px;font-size:16px;line-height:21px;transform:scaleX(0.9829)">Dokumentencode:</span><span class="tx" style="left:774.00px;top:156px;font-size:16px;line-height:21px;transform:scaleX(0.9687)">Dokumentensatz:</span><span class="tx" style="left:774.00px;top:175px;font-size:16px;line-height:21px;transform:scaleX(0.9890)">Exportdatei:</span><span class="tx" style="left:774.00px;top:194px;font-size:16px;line-height:21px;transform:scaleX(0.9921)">aktiv bis:</span><div style="left:770px;top:497.5px;width:365px;height:17.5px;background:#f0f0f0"></div><div style="left:787px;top:506px;width:177px;height:2px;background:#8a8a8a"></div></div><div id="bp" style="left:251px;top:601px;width:1139px;height:187.5px;background:#f5f5f5;border:1px solid #b2b2b2;border-radius:4px 4px 0 0;overflow:hidden"><div style="left:0;top:22px;width:1137px;height:1px;background:#a2a2a2"></div><div style="left:0;top:0;width:124px;height:23px;background:#fdfdfd;border-right:1px solid #a6a6a6"></div><span class="tx" style="left:3.00px;top:3.8px;font-size:12px;line-height:16px;transform:scaleX(0.9808)">Selektionskriterien</span><svg style="left:107px;top:6.7px" width="11" height="11" viewBox="0 0 11 11"><path d="M1 1l9.200 8.600M10.200 1l-9.200 8.600" stroke="#222" stroke-width="1"/></svg><span class="tx" style="left:129.00px;top:3.8px;font-size:12px;line-height:16px;transform:scaleX(1.0239);color:#555">Dokument Definitionen</span><div style="left:256px;top:0;width:1px;height:22px;background:#a6a6a6"></div><span class="tx" style="left:261.00px;top:3.8px;font-size:12px;line-height:16px;transform:scaleX(0.9734);color:#555">Dokumente Test DO</span><div style="left:369px;top:0;width:1px;height:22px;background:#a6a6a6"></div><svg style="left:1066px;top:0" width="70" height="22" viewBox="1320 605 70 22" fill="none"><g stroke="#444" stroke-width="0.9"><circle cx="1330" cy="611.2" r="1.7"/><circle cx="1330" cy="616.1" r="1.7"/><circle cx="1330" cy="621" r="1.7"/></g><rect x="1348.5" y="610.5" width="9" height="3" stroke="#555" stroke-width="1"/><rect x="1371.5" y="610.5" width="9" height="9" stroke="#555" stroke-width="1"/><path d="M1371.5 612.500h9" stroke="#555" stroke-width="1"/></svg><span class="tx" style="left:2.00px;top:24px;font-size:16px;line-height:21px;transform:scaleX(0.9735)">Selektionskriterien zur Verdankung: 2 Spenden (1)</span><div style="left:2px;top:43px;width:1132.6px;height:140px;background:#fff;overflow:hidden"><svg style="left:33.5px;top:0.2px" width="9" height="5" viewBox="0 0 9 5"><path d="M0.5 4.5l4-3.800 4 3.800" fill="none" stroke="#444" stroke-width="1"/></svg><span class="tx" style="left:10.00px;top:2px;font-size:16px;line-height:21px;transform:scaleX(1.0182)">Position</span><span class="tx" style="left:80.00px;top:2px;font-size:16px;line-height:21px;transform:scaleX(0.9433)">V</span><span class="tx" style="left:156.00px;top:2px;font-size:16px;line-height:21px;transform:scaleX(0.8215)">(</span><span class="tx" style="left:206.00px;top:2px;font-size:16px;line-height:21px;transform:scaleX(1.0003)">Selektion</span><span class="tx" style="left:1090.00px;top:2px;font-size:16px;line-height:21px;transform:scaleX(0.9225)">)</span><div style="left:72.5px;top:0;width:1px;height:24px;background:#e5e5e5"></div><div style="left:149.5px;top:0;width:1px;height:24px;background:#e5e5e5"></div><div style="left:199.5px;top:0;width:1px;height:24px;background:#e5e5e5"></div><div style="left:1082.5px;top:0;width:1px;height:24px;background:#e5e5e5"></div><div style="left:0;top:24px;width:1px;height:116px;background:#c6c6c6"></div><div style="left:2px;top:24px;width:1131px;height:21px;background:#ababab"></div><span class="tx" style="left:47.00px;top:25.4px;font-size:16px;line-height:21px;transform:scaleX(1.0075)">10</span><span class="tx" style="left:206.00px;top:25.4px;font-size:16px;line-height:21px;transform:scaleX(0.9658)">2: Umsatztypen: pro,spe</span><div style="left:2px;top:46px;width:1131px;height:21px;background:#c9c9c9"></div><div style="left:2px;top:68px;width:1131px;height:21px;background:#c9c9c9"></div><div style="left:2px;top:90px;width:1131px;height:21px;background:#c9c9c9"></div><div style="left:2px;top:112px;width:1131px;height:21px;background:#c9c9c9"></div><div style="left:2px;top:134px;width:1131px;height:21px;background:#c9c9c9"></div><div style="left:73px;top:24px;width:1.3px;height:120px;background:#f4f4f4"></div><div style="left:150px;top:24px;width:1.3px;height:120px;background:#f4f4f4"></div><div style="left:200px;top:24px;width:1.3px;height:120px;background:#f4f4f4"></div><div style="left:1083px;top:24px;width:1.3px;height:120px;background:#f4f4f4"></div></div></div></div></body></html>
